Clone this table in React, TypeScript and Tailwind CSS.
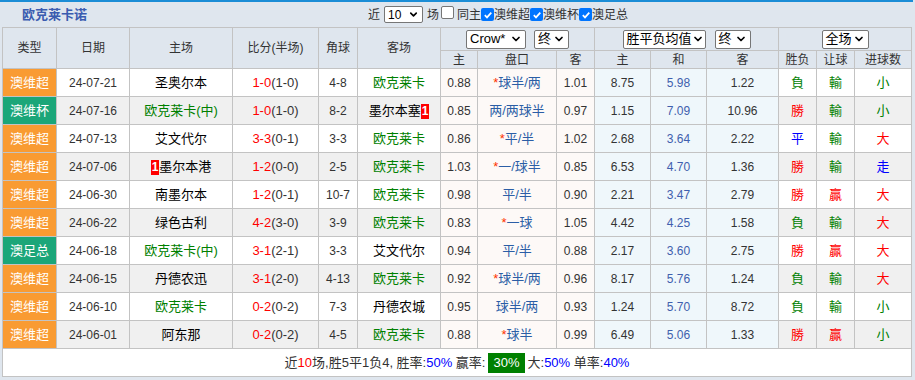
import React from 'react';
import { ChevronDown } from 'lucide-react';

type Match = {
  type: string;
  date: string;
  home: string;
  homeCard?: 'before' | 'after';
  score: string;
  half: string;
  corner: string;
  away: string;
  awayCard?: 'before' | 'after';
  ah: [string, string, string];
  eu: [string, string, string];
  wl: string;
  ahRes: string;
  ou: string;
};

const matches: Match[] = [
  { type: '澳维超', date: '24-07-21', home: '圣奥尔本', score: '1-0', half: '(1-0)', corner: '4-8', away: '欧克莱卡', ah: ['0.88', '*球半/两', '1.01'], eu: ['8.75', '5.98', '1.22'], wl: '負', ahRes: '輸', ou: '小' },
  { type: '澳维杯', date: '24-07-16', home: '欧克莱卡(中)', score: '1-0', half: '(1-0)', corner: '8-2', away: '墨尔本塞', awayCard: 'after', ah: ['0.85', '两/两球半', '0.97'], eu: ['1.15', '7.09', '10.96'], wl: '勝', ahRes: '輸', ou: '小' },
  { type: '澳维超', date: '24-07-13', home: '艾文代尔', score: '3-3', half: '(0-1)', corner: '3-3', away: '欧克莱卡', ah: ['0.86', '*平/半', '1.02'], eu: ['2.68', '3.64', '2.22'], wl: '平', ahRes: '輸', ou: '大' },
  { type: '澳维超', date: '24-07-06', home: '墨尔本港', homeCard: 'before', score: '1-2', half: '(0-0)', corner: '2-5', away: '欧克莱卡', ah: ['1.03', '*一/球半', '0.85'], eu: ['6.53', '4.70', '1.36'], wl: '勝', ahRes: '輸', ou: '走' },
  { type: '澳维超', date: '24-06-30', home: '南墨尔本', score: '1-2', half: '(0-1)', corner: '10-7', away: '欧克莱卡', ah: ['0.98', '平/半', '0.90'], eu: ['2.21', '3.47', '2.79'], wl: '勝', ahRes: '贏', ou: '大' },
  { type: '澳维超', date: '24-06-22', home: '绿色古利', score: '4-2', half: '(3-0)', corner: '3-9', away: '欧克莱卡', ah: ['0.83', '*一球', '1.05'], eu: ['4.42', '4.25', '1.58'], wl: '負', ahRes: '輸', ou: '大' },
  { type: '澳足总', date: '24-06-18', home: '欧克莱卡(中)', score: '3-1', half: '(2-1)', corner: '3-3', away: '艾文代尔', ah: ['0.94', '平/半', '0.88'], eu: ['2.17', '3.60', '2.75'], wl: '勝', ahRes: '贏', ou: '大' },
  { type: '澳维超', date: '24-06-15', home: '丹德农迅', score: '3-1', half: '(2-0)', corner: '4-13', away: '欧克莱卡', ah: ['0.92', '*球半/两', '0.96'], eu: ['8.17', '5.76', '1.24'], wl: '負', ahRes: '輸', ou: '大' },
  { type: '澳维超', date: '24-06-10', home: '欧克莱卡', score: '0-2', half: '(0-2)', corner: '7-3', away: '丹德农城', ah: ['0.95', '球半/两', '0.93'], eu: ['1.24', '5.70', '8.72'], wl: '負', ahRes: '輸', ou: '小' },
  { type: '澳维超', date: '24-06-01', home: '阿东那', score: '0-2', half: '(0-2)', corner: '4-5', away: '欧克莱卡', ah: ['0.88', '*球半', '0.99'], eu: ['6.49', '5.06', '1.33'], wl: '勝', ahRes: '贏', ou: '小' },
];

const resultColor: Record<string, string> = {
  勝: 'text-[#ff0000]',
  贏: 'text-[#ff0000]',
  大: 'text-[#ff0000]',
  負: 'text-[#008000]',
  輸: 'text-[#008000]',
  小: 'text-[#008000]',
  平: 'text-[#0000ff]',
  走: 'text-[#0000ff]',
};

const cols = [54, 73, 103, 86, 39, 83, 37, 79, 38, 56, 56, 72, 38, 38, 57];

const RedCard = () => (
  <span className="inline-block bg-[#ff0000] text-white font-bold text-[12px] leading-[15px] px-[1px]">1</span>
);

const Team = ({ name, card }: { name: string; card?: 'before' | 'after' }) => {
  const ours = name.startsWith('欧克莱卡');
  return (
    <span className={ours ? 'text-[#008000]' : 'text-black'}>
      {card === 'before' && <RedCard />}
      {name}
      {card === 'after' && <RedCard />}
    </span>
  );
};

const FakeSelect = ({ label, w }: { label: string; w: string }) => (
  <div className={`${w} h-[19px] shrink-0 bg-white border border-[#767676] rounded-[2px] flex items-center justify-between pl-[3px] pr-[3px] text-[13px] text-black whitespace-nowrap`}>
    <span>{label}</span>
    <ChevronDown size={12} strokeWidth={3.5} className="shrink-0" />
  </div>
);

const Check = ({ on }: { on?: boolean }) => (
  <span
    className={`inline-flex items-center justify-center w-[13px] h-[13px] rounded-[2px] ${on ? 'bg-[#0075ff]' : 'bg-white border border-[#767676]'}`}
  >
    {on && (
      <svg width="10" height="10" viewBox="0 0 10 10">
        <path d="M1.8 5.2 L4 7.4 L8.3 2.6" fill="none" stroke="white" strokeWidth="1.7" />
      </svg>
    )}
  </span>
);

export default function App() {
  const td = 'border border-[#c3c3c3] p-0 text-center h-[28px]';
  const th = 'border border-[#c3c3c3] p-0 text-center font-normal text-[#333]';
  return (
    <div className="w-[915px] h-[380px] bg-[#dfe6ee] [font-family:'Liberation_Sans','Noto_Sans_CJK_SC',sans-serif] text-[12px] text-[#333] overflow-hidden">
      <div className="w-[913px] border-t-[2px] border-[#1b8dd6]">
        {/* title bar */}
        <div className="h-[25px] flex items-center">
          <div className="w-[368px] pl-[22px] text-[13px] font-bold text-[#3b5cb0]">欧克莱卡诺</div>
          <div className="flex items-center text-[12px] text-[#333]">
            <span>近</span>
            <div className="ml-[4px] w-[39px] h-[17px] bg-white border border-[#767676] rounded-[2px] flex items-center justify-between px-[3px] text-[12px] text-black">
              <span>10</span>
              <ChevronDown size={11} strokeWidth={3.5} />
            </div>
            <span className="ml-[4px]">场</span>
            <span className="ml-[2px]"><Check /></span>
            <span className="ml-[3px]">同主</span>
            <Check on />
            <span>澳维超</span>
            <Check on />
            <span>澳维杯</span>
            <Check on />
            <span>澳足总</span>
          </div>
        </div>

        <table className="ml-[2px] border-collapse table-fixed w-[909px]">
          <colgroup>
            {cols.map((w, i) => (
              <col key={i} style={{ width: w }} />
            ))}
          </colgroup>
          <thead>
            <tr className="h-[23px]">
              <th rowSpan={2} className={th}>类型</th>
              <th rowSpan={2} className={th}>日期</th>
              <th rowSpan={2} className={th}>主场</th>
              <th rowSpan={2} className={th}>比分(半场)</th>
              <th rowSpan={2} className={th}>角球</th>
              <th rowSpan={2} className={th}>客场</th>
              <th colSpan={3} className={th}>
                <div className="flex justify-center gap-[8px]">
                  <FakeSelect label="Crow*" w="w-[60px]" />
                  <FakeSelect label="终" w="w-[35px]" />
                </div>
              </th>
              <th colSpan={3} className={th}>
                <div className="flex justify-center gap-[9px]">
                  <FakeSelect label="胜平负均值" w="w-[83px]" />
                  <FakeSelect label="终" w="w-[36px]" />
                </div>
              </th>
              <th colSpan={3} className={th}>
                <div className="flex justify-center">
                  <FakeSelect label="全场" w="w-[47px]" />
                </div>
              </th>
            </tr>
            <tr className="h-[18px]">
              {['主', '盘口', '客', '主', '和', '客', '胜负', '让球', '进球数'].map((t, i) => (
                <th key={i} className={`${th} leading-[16px]`}>{t}</th>
              ))}
            </tr>
          </thead>
          <tbody>
            {matches.map((m, i) => {
              const alt = i % 2 === 1 ? 'bg-[#f0f0f0]' : 'bg-white';
              const badge = m.type === '澳维超' ? 'bg-[#f99b32]' : 'bg-[#1ba679]';
              const star = m.ah[1].startsWith('*');
              return (
                <tr key={i}>
                  <td className={`${td} ${badge} text-white text-[13px]`}>{m.type}</td>
                  <td className={`${td} ${alt}`}>{m.date}</td>
                  <td className={`${td} ${alt} text-[13px]`}>
                    <Team name={m.home} card={m.homeCard} />
                  </td>
                  <td className={`${td} ${alt} text-[13px]`}>
                    <span className="text-[#ff0000]">{m.score}</span>
                    <span className="text-[#333]">{m.half}</span>
                  </td>
                  <td className={`${td} ${alt}`}>{m.corner}</td>
                  <td className={`${td} ${alt} text-[13px]`}>
                    <Team name={m.away} card={m.awayCard} />
                  </td>
                  <td className={`${td} bg-[#fdf9f7]`}>{m.ah[0]}</td>
                  <td className={`${td} bg-[#fdf9f7] text-[13px] text-[#2b5ea6]`}>
                    {star && <span className="text-[#ff3300]">*</span>}
                    {star ? m.ah[1].slice(1) : m.ah[1]}
                  </td>
                  <td className={`${td} bg-[#fdf9f7]`}>{m.ah[2]}</td>
                  <td className={`${td} bg-[#eff7fb]`}>{m.eu[0]}</td>
                  <td className={`${td} bg-[#eff7fb] text-[#3f5fae]`}>{m.eu[1]}</td>
                  <td className={`${td} bg-[#eff7fb]`}>{m.eu[2]}</td>
                  <td className={`${td} ${alt} text-[13px] ${resultColor[m.wl]}`}>{m.wl}</td>
                  <td className={`${td} ${alt} text-[13px] ${resultColor[m.ahRes]}`}>{m.ahRes}</td>
                  <td className={`${td} ${alt} text-[13px] ${resultColor[m.ou]}`}>{m.ou}</td>
                </tr>
              );
            })}
            <tr>
              <td colSpan={15} className={`${td} bg-white text-[13px] text-[#333]`}>
                <div className="flex items-center justify-center">
                  <span>
                    近<span className="text-[#ff0000]">10</span>场,胜5平1负4, 胜率:<span className="text-[#0000ff]">50%</span> 赢率:
                  </span>
                  <span className="ml-[3px] bg-[#008000] text-white px-[5px] leading-[20px]">30%</span>
                  <span className="ml-[3px]">
                    大:<span className="text-[#0000ff]">50%</span> 单率:<span className="text-[#0000ff]">40%</span>
                  </span>
                </div>
              </td>
            </tr>
          </tbody>
        </table>
      </div>
    </div>
  );
}
